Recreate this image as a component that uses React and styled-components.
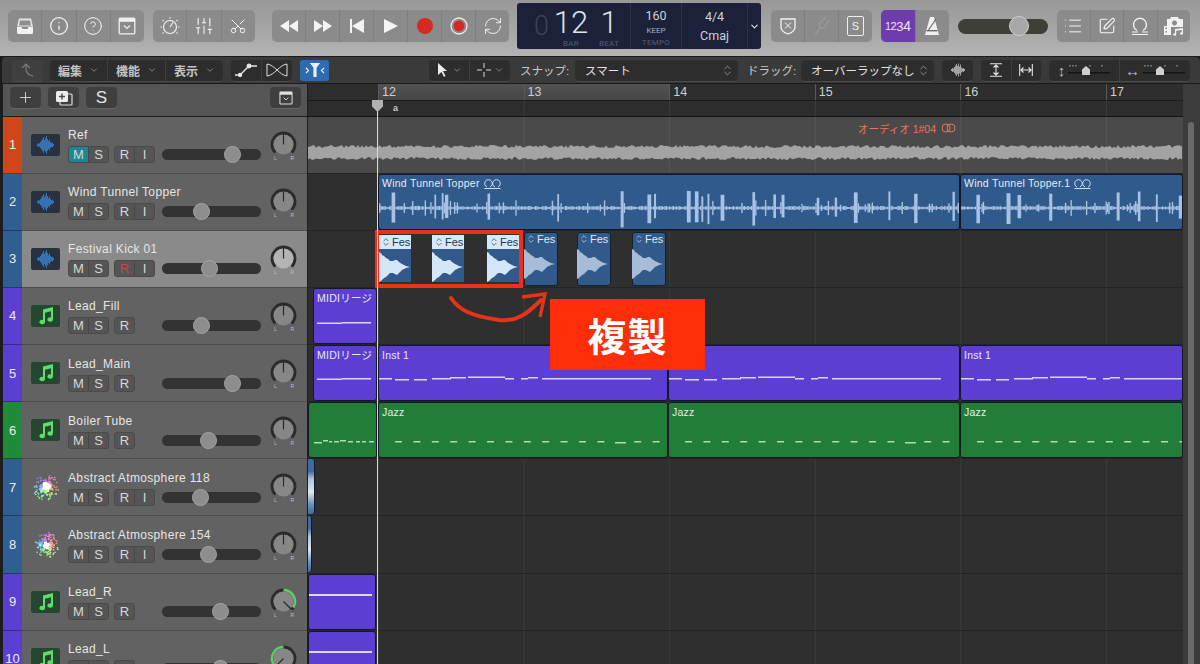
import React from "react";
import styled, { createGlobalStyle } from "styled-components";
import {
  ChevronDown,
  ChevronsUpDown,
  CircleHelp,
  Info,
  List,
  Plus,
  RefreshCw,
  Scissors,
  SlidersVertical,
  SquarePen,
} from "lucide-react";

const LANE_X = 308;
const BAR = 145.6;
const ROW = 57.15;

function rng(seed) {
  let s = seed;
  return () => {
    s = (s * 16807) % 2147483647;
    return (s % 10000) / 10000;
  };
}

/* ---------- drawings ---------- */

function RefWave({ width }) {
  const r = rng(77);
  let top = "";
  let bottom = "";
  for (let x = 0; x <= width; x += 2) {
    top += `${x},${10 - 5 - r() * 3} `;
    bottom = `${x},${10 + 4 + r() * 3} ` + bottom;
  }
  return (
    <svg width={width} height={20}>
      <polygon points={top + bottom} fill="#a3a3a3" />
    </svg>
  );
}

function SpikeWave({ width, seed }) {
  const r = rng(seed);
  const bars = [];
  let x = 0;
  while (x < width) {
    const p = r();
    let amp = 0.8 + r() * 1.4;
    let w = 1.4;
    if (p > 0.95) {
      amp = 10 + r() * 7;
      w = 1.5 + r() * 2.5;
    } else if (p > 0.84) {
      amp = 3 + r() * 5;
    }
    const down = p > 0.95 ? amp * (0.7 + r() * 0.5) : amp;
    bars.push(<rect key={x} x={x} y={17 - amp} width={w} height={amp + down} />);
    x += w;
  }
  return (
    <svg width={width} height={40} fill="#a7c2e4">
      {bars}
    </svg>
  );
}

function KickWave({ color }) {
  return (
    <svg width="32" height="30" viewBox="0 0 32 30">
      <path
        d="M0 0 L2 1 L3 3 L5 4 L7 6 L9 7 L11 9 L14 9 L16 8 L18 8 L20 10 L23 12 L27 14 L31 15 L27 16 L23 18 L20 21 L18 23 L16 22 L14 21 L11 21 L9 23 L7 25 L5 26 L3 28 L2 29 L0 30 Z"
        fill={color}
      />
    </svg>
  );
}

function Dashes({ items, width, color = "#dcd6f4", h = 1.5 }) {
  return (
    <svg width={width} height={8}>
      {items.map(([x, w, dy = 0], i) => (
        <rect key={i} x={x} y={4 + dy} width={w} height={h} fill={color} />
      ))}
    </svg>
  );
}

const INST = [
  [0, 13], [16, 14, 1], [35, 13, 1], [53, 19], [71, 16, -1], [89, 37, -1.5],
  [126, 9], [142, 7], [149, 10, -1], [163, 109],
];
const MIDI_LINE = [[3, 25, 0.5], [28, 29]];
const JAZZ = Array.from({ length: 15 }, (_, i) =>
  i === 12 ? [236, 11, 1] : [16 + i * 18.4, 7, 0]
);
const JAZZ_INTRO = [[5, 8, 1], [14, 5, -1], [20, 3], [25, 5], [31, 6, -1], [39, 5], [47, 4], [53, 4], [60, 5]];

function arcPath(cx, cy, r, from, to) {
  const pt = (a) => {
    const t = ((a - 90) * Math.PI) / 180;
    return `${cx + r * Math.cos(t)} ${cy + r * Math.sin(t)}`;
  };
  return `M${pt(from)} A${r} ${r} 0 ${to - from > 180 ? 1 : 0} 1 ${pt(to)}`;
}

function PanKnob({ pan = 0, selected }) {
  const disc = selected ? "#b4b4b4" : "#878787";
  return (
    <KnobWrap>
      <svg width="27" height="27" viewBox="0 0 27 27">
        <path d={arcPath(13.5, 13.5, 11.5, -135, 135)} stroke="#2b2b2b" strokeWidth="2.8" fill="none" />
        {pan > 0 && <path d={arcPath(13.5, 13.5, 11.5, 0, 122)} stroke="#62c86b" strokeWidth="2.8" fill="none" />}
        {pan < 0 && <path d={arcPath(13.5, 13.5, 11.5, -122, 0)} stroke="#62c86b" strokeWidth="2.8" fill="none" />}
        <circle cx="13.5" cy="13.5" r="10" fill={disc} />
        <path
          d="M13.5 13.5V2.5"
          stroke="#2b2b2b"
          strokeWidth="1.2"
          transform={`rotate(${pan * 135} 13.5 13.5)`}
        />
      </svg>
      <KnobLabels>
        <span>L</span>
        <span>R</span>
      </KnobLabels>
    </KnobWrap>
  );
}

function AudioGlyph() {
  const h = [2, 4, 3, 6, 9, 12, 16, 10, 14, 18, 12, 8, 11, 6, 4, 5, 2];
  return (
    <svg width="24" height="20" viewBox="0 0 24 20">
      {h.map((v, i) => (
        <rect key={i} x={3 + i} y={10 - v / 2} width="0.7" height={v} fill="#3d8fe6" />
      ))}
    </svg>
  );
}

function NoteGlyph() {
  return (
    <svg width="18" height="20" viewBox="0 0 18 20">
      <path
        d="M6 3.5 L16 1 V13.5 A2.8 2.2 0 1 1 14 11.4 V5.2 L8 6.7 V16 A2.8 2.2 0 1 1 6 13.9 Z"
        fill="#5fdc6c"
      />
    </svg>
  );
}

function SynthGlyph({ seed }) {
  const r = rng(seed);
  const dots = [];
  for (let i = 0; i < 110; i++) {
    const a = r() * Math.PI * 2;
    const d = Math.pow(r(), 0.7) * 13;
    dots.push(
      <circle
        key={i}
        cx={14 + Math.cos(a) * d}
        cy={14 + Math.sin(a) * d}
        r={d < 6 ? 1.6 : 0.8}
        fill={d < 4 ? "#ffffff" : `hsl(${(a * 180) / Math.PI + 40 * r()}, 85%, 74%)`}
      />
    );
  }
  return (
    <svg width="28" height="28" viewBox="0 0 28 28">
      {dots}
    </svg>
  );
}

const line = { fill: "none", stroke: "#f4f4f4", strokeWidth: 1.3 };

const LibraryIcon = () => (
  <svg width="18" height="18" viewBox="0 0 18 18">
    <path d="M3 1.5h12l2 8H1z" fill="#e6e6e6" />
    <path d="M4 3.5h10l1 5H3z" fill="#8d8d8d" />
    <path d="M1 10h4.5l1 2h5l1-2H17v5.5a1.5 1.5 0 0 1-1.5 1.5h-13A1.5 1.5 0 0 1 1 15.5z" fill="#f2f2f2" />
  </svg>
);
const PanelIcon = ({ color = "#f1f1f1", size = 18 }) => (
  <svg width={size} height={size} viewBox="0 0 18 18">
    <rect x="1.2" y="1.2" width="15.6" height="15.6" rx="1" fill="none" stroke={color} strokeWidth="1.3" />
    <rect x="1.2" y="1.2" width="15.6" height="3.6" fill={color} />
    <path d="M6 8.5l3 3 3-3" fill="none" stroke={color} strokeWidth="1.2" />
  </svg>
);
const DialIcon = () => (
  <svg width="20" height="20" viewBox="0 0 20 20" {...line} strokeWidth="1.1">
    <circle cx="10" cy="11" r="6.5" />
    <path d="M10 11l3-4.500" />
    <path d="M10 1v1.500M2.500 4l1 1M17.500 4l-1 1M0.500 11h1.500M18 11h1.500M2.500 17.500l1-1M17.500 17.500l-1-1" />
  </svg>
);
const Rewind = () => (
  <svg width="20" height="14" viewBox="0 0 20 14" fill="#f4f4f4">
    <path d="M10 1v12L1 7zM19 1v12l-9-6z" />
  </svg>
);
const Forward = () => (
  <svg width="20" height="14" viewBox="0 0 20 14" fill="#f4f4f4">
    <path d="M1 1v12l9-6zM10 1v12l9-6z" />
  </svg>
);
const ToStart = () => (
  <svg width="16" height="16" viewBox="0 0 16 16" fill="#f4f4f4">
    <path d="M1 1h2v14H1zM15 1v14L3 8z" />
  </svg>
);
const PlayIcon = () => (
  <svg width="16" height="16" viewBox="0 0 16 16" fill="#f4f4f4">
    <path d="M1 1l14 7-14 7z" />
  </svg>
);
const RecordIcon = () => (
  <svg width="18" height="18">
    <circle cx="9" cy="9" r="8" fill="#d42a22" />
  </svg>
);
const ReplaceIcon = () => (
  <svg width="18" height="18">
    <circle cx="9" cy="9" r="8" fill="none" stroke="#ececec" strokeWidth="1.3" />
    <circle cx="9" cy="9" r="5.4" fill="#d42a22" />
  </svg>
);
const ShieldIcon = () => (
  <svg width="16" height="18" viewBox="0 0 16 18" {...line}>
    <path d="M1 2h14v8c0 4-4 6-7 7-3-1-7-3-7-7z" />
    <path d="M5 5.500l6 6M11 5.500l-6 6" strokeWidth="1" />
  </svg>
);
const ForkIcon = () => (
  <svg width="16" height="20" viewBox="0 0 16 20" fill="none" stroke="#9b9b9b" strokeWidth="1.2">
    <path d="M1 19l5-7M6 12l-1-4 7-7M6 12l4 0 5-8" />
  </svg>
);
const SoloBoxIcon = () => <Boxed>S</Boxed>;
const MetronomeIcon = () => (
  <svg width="15" height="20" viewBox="0 0 15 20">
    <path d="M5 1h4l5 18H0z" fill="#f0f0f0" />
    <path d="M3.500 14L11 3" stroke="#6c6c6c" strokeWidth="1.2" />
    <rect x="1.500" y="14" width="11" height="1.4" fill="#6c6c6c" />
  </svg>
);
const LoopIcon = () => (
  <svg width="18" height="20" viewBox="0 0 18 20" {...line}>
    <path d="M6 14.500A6.500 6.500 0 1 1 12 14.500" />
    <path d="M1 16h6M11 16h6M1 18.500h16" strokeWidth="1" />
  </svg>
);
const MediaIcon = () => (
  <svg width="22" height="20" viewBox="0 0 22 20" fill="#f1f1f1">
    <path d="M8 1h7l1 2h4v8H4V3h3zM11.500 4.500a2.500 2.500 0 1 0 .01 0z" fillRule="evenodd" />
    <path d="M1 10h7v9H1zM2.500 11.500v1.500h1.500v-1.500zM2.500 15v1.500h1.500v-1.500z" fillRule="evenodd" />
    <path d="M12 13l8-1v5.500a1.500 1.300 0 1 1-1.200-1.300V14l-5.600.7v3.800a1.500 1.300 0 1 1-1.200-1.300z" />
  </svg>
);
const AutomationIcon = () => (
  <svg width="24" height="14" viewBox="0 0 24 14" fill="none" stroke="#e6e6e6" strokeWidth="1.3">
    <path d="M1 12h5l9-9h8" />
    <circle cx="6" cy="12" r="1.500" fill="#e6e6e6" />
    <circle cx="15" cy="3" r="1.800" fill="#e6e6e6" />
  </svg>
);
const FlexIcon = () => (
  <svg width="22" height="14" viewBox="0 0 22 14" fill="none" stroke="#dcdcdc" strokeWidth="1">
    <path d="M1 1v12M21 1v12M1 1c8 1 12 11 20 12M1 13c8-1 12-11 20-12" />
  </svg>
);
const CatchIcon = () => (
  <svg width="20" height="14" viewBox="0 0 20 14" fill="none" stroke="#e8f2ff" strokeWidth="1.2">
    <path d="M6 0.500h8l-3 4v9H9v-9z" fill="#e8f2ff" />
    <path d="M1 5l2.500 2.500L1 10M19 5l-2.500 2.500L19 10" />
  </svg>
);
const BackIcon = () => (
  <svg width="14" height="16" viewBox="0 0 14 16" fill="none" stroke="#7c7c7c" strokeWidth="1.2">
    <path d="M1 6l4-4 4 4M5 2v5c0 4 3 6 7 7" />
  </svg>
);
const PointerIcon = () => (
  <svg width="12" height="14" viewBox="0 0 12 14" fill="#ececec">
    <path d="M1 0l9 8H6l2.500 5-1.500 1L4.500 9 1 12z" />
  </svg>
);
const CrossIcon = () => (
  <svg width="14" height="14" viewBox="0 0 14 14" fill="none" stroke="#dcdcdc" strokeWidth="1">
    <path d="M7 0v5M7 9v5M0 7h5M9 7h5" />
  </svg>
);
const ZoomWave = () => {
  const h = [2, 4, 3, 6, 9, 12, 8, 13, 7, 11, 5, 3, 4, 2];
  return (
    <svg width="18" height="14">
      {h.map((v, i) => (
        <rect key={i} x={2 + i} y={7 - v / 2} width="0.7" height={v} fill="#d6d6d6" />
      ))}
    </svg>
  );
};
const FitV = () => (
  <svg width="14" height="14" viewBox="0 0 14 14" fill="none" stroke="#e4e4e4" strokeWidth="1.1">
    <path d="M1 0.700h12M1 13.300h12M7 2v10M4.500 4.500L7 2l2.500 2.500M4.500 9.500L7 12l2.500-2.500" />
  </svg>
);
const FitH = () => (
  <svg width="14" height="14" viewBox="0 0 14 14" fill="none" stroke="#e4e4e4" strokeWidth="1.1">
    <path d="M0.700 1v12M13.300 1v12M2 7h10M4.500 4.500L2 7l2.500 2.500M9.500 4.500L12 7l-2.500 2.500" />
  </svg>
);
const DuplicateIcon = () => (
  <svg width="18" height="16" viewBox="0 0 18 16">
    <rect x="5" y="4" width="12" height="11" rx="1" fill="none" stroke="#dedede" strokeWidth="1.2" />
    <rect x="1" y="1" width="12" height="11" rx="1.500" fill="#ececec" />
    <path d="M7 3.500v6M4 6.500h6" stroke="#4c4c4c" strokeWidth="1.4" />
  </svg>
);
const LoopRings = ({ color }) => (
  <svg width="15" height="10" viewBox="0 0 15 10" fill="none" stroke={color} strokeWidth="1">
    <circle cx="5" cy="5" r="4" />
    <circle cx="10" cy="5" r="4" />
  </svg>
);
const LinkedOmega = () => (
  <svg width="17" height="11" viewBox="0 0 17 11" fill="none" stroke="#cfe0f3" strokeWidth="1">
    <path d="M3 9a3.800 3.800 0 1 1 3 0M11 9a3.800 3.800 0 1 1 3 0" />
    <path d="M0.500 10.500h16" />
  </svg>
);
const MiniZoom = ({ x }) => (
  <svg width="42" height="16" viewBox="0 0 42 16">
    <path d="M2 3v1.500M5 3v1.500M8 3v1.500M22 3v1.500M34 3v1.500" stroke="#b8b8b8" strokeWidth="1" />
    <rect x="0" y="10" width="42" height="1.500" fill="#141414" />
    <path d={`M${x} 4l4 3.500v5.500h-8v-5.500z`} fill="#cfcfcf" />
  </svg>
);

/* ---------- data ---------- */

const TRACKS = [
  { n: 1, name: "Ref", color: "#d1471b", icon: "audio", fader: 232, input: true, mute: true },
  { n: 2, name: "Wind Tunnel Topper", color: "#2f5e93", icon: "audio", fader: 201, input: true },
  { n: 3, name: "Festival Kick 01", color: "#2f5e93", icon: "audio", fader: 209, input: true, selected: true, rec: true },
  { n: 4, name: "Lead_Fill", color: "#5a3fd1", icon: "note", fader: 201 },
  { n: 5, name: "Lead_Main", color: "#5a3fd1", icon: "note", fader: 232 },
  { n: 6, name: "Boiler Tube", color: "#1f8a37", icon: "note", fader: 208 },
  { n: 7, name: "Abstract Atmosphere 118", color: "#2f5e93", icon: "synth", fader: 200, input: true },
  { n: 8, name: "Abstract Atmosphere 154", color: "#2f5e93", icon: "synth", fader: 208, input: true },
  { n: 9, name: "Lead_R", color: "#5a3fd1", icon: "note", fader: 220, pan: 1 },
  { n: 10, name: "Lead_L", color: "#5a3fd1", icon: "note", fader: 220, pan: -1 },
];

const BLUE = "#2f5a8b";
const PURPLE = "#5c3ed2";
const GREEN = "#217d37";
const JAZZ_DASH = "#a9e0b0";

/* ---------- small parts ---------- */

function TrackRow({ t }) {
  return (
    <Row>
      <Strip $color={t.color}>{t.n}</Strip>
      <RowBody $selected={t.selected}>
        {t.icon === "synth" ? (
          <SynthBox>
            <SynthGlyph seed={t.n * 91} />
          </SynthBox>
        ) : (
          <IconBox $note={t.icon === "note"}>{t.icon === "note" ? <NoteGlyph /> : <AudioGlyph />}</IconBox>
        )}
        <TrackInfo>
          <TrackName>{t.name}</TrackName>
          <Controls>
            <Pair>
              <Mini $active={t.mute}>M</Mini>
              <Mini>S</Mini>
            </Pair>
            <Pair>
              <Mini $rec={t.rec}>R</Mini>
              {t.input && <Mini>I</Mini>}
            </Pair>
            <FaderTrack>
              <FaderThumb $x={t.fader - 161 - 9} />
            </FaderTrack>
          </Controls>
        </TrackInfo>
        <PanKnob pan={t.pan} selected={t.selected} />
      </RowBody>
    </Row>
  );
}

function Region({ x, w, color, label, children }) {
  return (
    <RegionBox $x={x - LANE_X} $w={w} $color={color}>
      {label && <RegionLabel>{label}</RegionLabel>}
      {children}
    </RegionBox>
  );
}

function KickRegion({ x, selected }) {
  return (
    <KickBox $x={x - LANE_X} $selected={selected}>
      <KickHead $selected={selected}>
        <ChevronsUpDown size={10} strokeWidth={1.6} />
        Fes
      </KickHead>
      <KickBody>
        <KickWave color={selected ? "#d3e6fa" : "#a6bcd8"} />
      </KickBody>
    </KickBox>
  );
}

export default function App() {
  return (
    <Page>
      <Global />
      <TopBar>
        <Group $w={136}>
          <TopBtn><LibraryIcon /></TopBtn>
          <TopBtn><Info size={20} color="#f6f6f6" strokeWidth={1.5} /></TopBtn>
          <TopBtn><CircleHelp size={20} color="#f6f6f6" strokeWidth={1.2} /></TopBtn>
          <TopBtn><PanelIcon /></TopBtn>
        </Group>
        <Group $w={102} $ml={9}>
          <TopBtn><DialIcon /></TopBtn>
          <TopBtn><SlidersVertical size={20} color="#f6f6f6" strokeWidth={1.3} /></TopBtn>
          <TopBtn><Scissors size={18} color="#f6f6f6" strokeWidth={1.3} style={{ transform: "rotate(-90deg)" }} /></TopBtn>
        </Group>
        <Group $w={237} $ml={17}>
          <TopBtn><Rewind /></TopBtn>
          <TopBtn><Forward /></TopBtn>
          <TopBtn><ToStart /></TopBtn>
          <TopBtn><PlayIcon /></TopBtn>
          <TopBtn><RecordIcon /></TopBtn>
          <TopBtn><ReplaceIcon /></TopBtn>
          <TopBtn><RefreshCw size={20} color="#f6f6f6" strokeWidth={1.1} /></TopBtn>
        </Group>
        <Lcd>
          <LcdPos>
            <LcdGhost>0</LcdGhost>
            <LcdCell $w={40}>
              <LcdBig>12</LcdBig>
              <LcdTiny>BAR</LcdTiny>
            </LcdCell>
            <LcdCell $w={36}>
              <LcdBig>1</LcdBig>
              <LcdTiny>BEAT</LcdTiny>
            </LcdCell>
          </LcdPos>
          <LcdTempo>
            <LcdMid>160</LcdMid>
            <LcdSmall>KEEP</LcdSmall>
            <LcdTiny>TEMPO</LcdTiny>
          </LcdTempo>
          <LcdSig>
            <LcdMid>4/4</LcdMid>
            <LcdMid>Cmaj</LcdMid>
          </LcdSig>
          <LcdMore>
            <ChevronDown size={11} color="#e4e4e4" strokeWidth={2.4} />
          </LcdMore>
        </Lcd>
        <Group $w={101} $ml={10}>
          <TopBtn><ShieldIcon /></TopBtn>
          <TopBtn><ForkIcon /></TopBtn>
          <TopBtn><SoloBoxIcon /></TopBtn>
        </Group>
        <Group $w={68} $ml={9}>
          <CountIn>
            <CountDigit $s={10}>1</CountDigit>
            <CountDigit $s={11}>2</CountDigit>
            <CountDigit $s={13}>3</CountDigit>
            <CountDigit $s={14}>4</CountDigit>
          </CountIn>
          <TopBtn><MetronomeIcon /></TopBtn>
        </Group>
        <Volume>
          <VolumeThumb />
        </Volume>
        <Group $w={133} $ml={9}>
          <TopBtn><List size={20} color="#f6f6f6" strokeWidth={1.2} /></TopBtn>
          <TopBtn><SquarePen size={18} color="#f6f6f6" strokeWidth={1.5} /></TopBtn>
          <TopBtn><LoopIcon /></TopBtn>
          <TopBtn><MediaIcon /></TopBtn>
        </Group>
      </TopBar>

      <Window>
        <EditBar>
          <DarkGroup $w={31} $ml={0} $flat><BackIcon /></DarkGroup>
          <DarkGroup $w={173} $ml={7}>
            <MenuItem>編集<ChevronDown size={10} strokeWidth={1.4} /></MenuItem>
            <MenuItem>機能<ChevronDown size={10} strokeWidth={1.4} /></MenuItem>
            <MenuItem>表示<ChevronDown size={10} strokeWidth={1.4} /></MenuItem>
          </DarkGroup>
          <DarkGroup $w={61} $ml={8}>
            <DarkBtn><AutomationIcon /></DarkBtn>
            <DarkBtn><FlexIcon /></DarkBtn>
          </DarkGroup>
          <CatchBtn><CatchIcon /></CatchBtn>
          <DarkGroup $w={81} $ml={100}>
            <DarkBtn><PointerIcon /><ChevronDown size={10} color="#bbb" strokeWidth={1.4} /></DarkBtn>
            <DarkBtn><CrossIcon /><ChevronDown size={10} color="#bbb" strokeWidth={1.4} /></DarkBtn>
          </DarkGroup>
          <BarLabel $ml={10}>スナップ:</BarLabel>
          <Select $w={163} $ml={7}>
            スマート
            <ChevronsUpDown size={13} strokeWidth={1.2} color="#bbb" />
          </Select>
          <BarLabel $ml={9}>ドラッグ:</BarLabel>
          <Select $w={133} $ml={6}>
            オーバーラップなし
            <ChevronsUpDown size={13} strokeWidth={1.2} color="#bbb" />
          </Select>
          <DarkGroup $w={31} $ml={8}><ZoomWave /></DarkGroup>
          <DarkGroup $w={60} $ml={8}>
            <DarkBtn><FitV /></DarkBtn>
            <DarkBtn><FitH /></DarkBtn>
          </DarkGroup>
          <DarkGroup $w={141} $ml={8}>
            <DarkBtn>
              <ArrowGlyph>↕</ArrowGlyph>
              <MiniZoom x={18} />
            </DarkBtn>
            <DarkBtn>
              <ArrowGlyph>↔</ArrowGlyph>
              <MiniZoom x={17} />
            </DarkBtn>
          </DarkGroup>
        </EditBar>

        <Body>
          <Left>
            <HeaderTools>
              <HeadBtn><Plus size={17} color="#e6e6e6" strokeWidth={1.2} /></HeadBtn>
              <HeadBtn><DuplicateIcon /></HeadBtn>
              <HeadBtn>S</HeadBtn>
              <HeadBtn $push><PanelIcon color="#e0e0e0" size={14} /></HeadBtn>
            </HeaderTools>
            {TRACKS.map((t) => (
              <TrackRow key={t.n} t={t} />
            ))}
          </Left>

          <Right>
            <Ruler>
              <BarRow>
                <BarCell $w={70} $blank />
                {[12, 13, 14, 15, 16, 17].map((b) => (
                  <BarCell key={b} $w={BAR} $lit={b < 14}>{b}</BarCell>
                ))}
              </BarRow>
              <MarkerRow>
                <MarkerA>a</MarkerA>
              </MarkerRow>
            </Ruler>

            <Lanes>
              <Lane $ref>
                <RefLabel>
                  オーディオ 1#04 <LoopRings color="#e9755a" />
                </RefLabel>
                <RefWaveWrap>
                  <RefWave width={875} />
                </RefWaveWrap>
              </Lane>
              <Lane>
                <Region x={378} w={582} color={BLUE} label={<>Wind Tunnel Topper <LinkedOmega /></>}>
                  <WaveSlot><SpikeWave width={582} seed={41} /></WaveSlot>
                </Region>
                <Region x={960} w={223} color={BLUE} label={<>Wind Tunnel Topper.1 <LinkedOmega /></>}>
                  <WaveSlot><SpikeWave width={223} seed={93} /></WaveSlot>
                </Region>
              </Lane>
              <Lane>
                <KickRegion x={379} selected />
                <KickRegion x={432} selected />
                <KickRegion x={487} selected />
                <KickRegion x={524} />
                <KickRegion x={577} />
                <KickRegion x={632} />
              </Lane>
              <Lane>
                <Region x={313} w={64} color={PURPLE} label="MIDIリージ">
                  <DashSlot $y={29}><Dashes width={62} items={MIDI_LINE} /></DashSlot>
                </Region>
              </Lane>
              <Lane>
                <Region x={313} w={64} color={PURPLE} label="MIDIリージ">
                  <DashSlot $y={28}><Dashes width={62} items={MIDI_LINE} /></DashSlot>
                </Region>
                <Region x={378} w={290} color={PURPLE} label="Inst 1">
                  <DashSlot $y={28}><Dashes width={288} items={INST} /></DashSlot>
                </Region>
                <Region x={668} w={292} color={PURPLE} label="Inst 1">
                  <DashSlot $y={28}><Dashes width={288} items={INST} /></DashSlot>
                </Region>
                <Region x={960} w={223} color={PURPLE} label="Inst 1">
                  <DashSlot $y={28}><Dashes width={222} items={INST} /></DashSlot>
                </Region>
              </Lane>
              <Lane>
                <Region x={308} w={69} color={GREEN}>
                  <DashSlot $y={34}><Dashes width={66} items={JAZZ_INTRO} color={JAZZ_DASH} /></DashSlot>
                </Region>
                <Region x={378} w={290} color={GREEN} label="Jazz">
                  <DashSlot $y={34}><Dashes width={288} items={JAZZ} color={JAZZ_DASH} /></DashSlot>
                </Region>
                <Region x={668} w={292} color={GREEN} label="Jazz">
                  <DashSlot $y={34}><Dashes width={288} items={JAZZ} color={JAZZ_DASH} /></DashSlot>
                </Region>
                <Region x={960} w={223} color={GREEN} label="Jazz">
                  <DashSlot $y={34}><Dashes width={222} items={JAZZ} color={JAZZ_DASH} /></DashSlot>
                </Region>
              </Lane>
              <Lane>
                <SliverRegion $w={6} />
              </Lane>
              <Lane>
                <SliverRegion $w={3} />
              </Lane>
              <Lane>
                <Region x={308} w={68} color={PURPLE}>
                  <PlainLine />
                </Region>
              </Lane>
              <Lane>
                <Region x={308} w={68} color={PURPLE}>
                  <PlainLine />
                </Region>
              </Lane>

              <SelectFrame />
              <CopyArrow viewBox="0 0 110 40" width="110" height="40">
                <path d="M2 6C10 18 22 24 50 28C68 30 78 22 92 8" fill="none" stroke="#e8321a" strokeWidth="4" strokeLinecap="round" />
                <path d="M73 5L96 2L91 25" fill="none" stroke="#e8321a" strokeWidth="3.4" />
              </CopyArrow>
              <CopyLabel>複製</CopyLabel>
            </Lanes>

            <Playhead>
              <PlayheadCap />
            </Playhead>
            <Scroller>
              <ScrollThumb />
            </Scroller>
          </Right>
        </Body>
      </Window>
    </Page>
  );
}

/* ---------- styles ---------- */

const Global = createGlobalStyle`
  html, body {
    margin: 0;
    padding: 0;
    background: #2b2b2b;
  }
  body {
    font-family: "Liberation Sans", "Noto Sans CJK JP", sans-serif;
  }
`;

const Page = styled.div`
  width: 1200px;
  height: 664px;
  overflow: hidden;
  display: flex;
  flex-direction: column;
`;

const TopBar = styled.div`
  height: 56px;
  flex: none;
  display: flex;
  align-items: center;
  padding: 0 0 4px 8px;
  box-sizing: border-box;
  background: linear-gradient(#989898, #b3b3b3);
`;

const Group = styled.div`
  width: ${(p) => p.$w}px;
  margin-left: ${(p) => p.$ml || 0}px;
  height: 32px;
  display: flex;
  flex: none;
  border-radius: 5px;
  overflow: hidden;
  background: #8b8b8b;
  box-shadow: 0 1px 0 #a8a8a8;
`;

const TopBtn = styled.div`
  flex: 1;
  display: flex;
  align-items: center;
  justify-content: center;
  border-left: 1px solid #7f7f7f;
  &:first-child {
    border-left: 0;
  }
`;

const Boxed = styled.div`
  width: 15px;
  height: 18px;
  border: 1px solid #efefef;
  border-radius: 2px;
  color: #efefef;
  font-size: 11px;
  display: flex;
  align-items: center;
  justify-content: center;
`;

const CountIn = styled.div`
  width: 34px;
  flex: none;
  background: #6f3cb0;
  color: #f0e6ff;
  display: flex;
  align-items: center;
  justify-content: center;
`;

const CountDigit = styled.span`
  font-size: ${(p) => p.$s}px;
  letter-spacing: -0.3px;
`;

const Lcd = styled.div`
  width: 244px;
  height: 46px;
  margin-left: 8px;
  flex: none;
  display: flex;
  border-radius: 3px;
  background: #1a2138;
  color: #d5d9e2;
  font-family: Roboto, "Liberation Sans", sans-serif;
`;

const LcdPos = styled.div`
  width: 114px;
  display: flex;
  padding-left: 17px;
  box-sizing: border-box;
  border-right: 1px solid #2a3148;
`;

const LcdGhost = styled.div`
  font-size: 27px;
  font-weight: 300;
  color: #3b4257;
  padding-top: 7px;
  width: 17px;
`;

const LcdCell = styled.div`
  width: ${(p) => p.$w}px;
  display: flex;
  flex-direction: column;
  align-items: center;
`;

const LcdBig = styled.div`
  font-size: 31px;
  font-weight: 300;
  line-height: 30px;
  margin-top: 5px;
  height: 33px;
  color: #dfe3ea;
`;

const LcdTiny = styled.div`
  font-size: 8px;
  line-height: 10px;
  color: #565d72;
  letter-spacing: 0.3px;
`;

const LcdTempo = styled.div`
  width: 51px;
  display: flex;
  flex-direction: column;
  align-items: center;
  padding-top: 5px;
  box-sizing: border-box;
  border-right: 1px solid #2a3148;
  ${LcdTiny} {
    margin-top: 2px;
  }
`;

const LcdMid = styled.div`
  font-size: 12.5px;
  line-height: 16px;
  color: #cdd2dc;
`;

const LcdSmall = styled.div`
  font-size: 8px;
  line-height: 10px;
  margin-top: 2px;
  color: #aab0bd;
`;

const LcdSig = styled.div`
  width: 66px;
  display: flex;
  flex-direction: column;
  align-items: center;
  gap: 3px;
  padding-top: 6px;
  box-sizing: border-box;
  border-right: 1px solid #2a3148;
`;

const LcdMore = styled.div`
  flex: 1;
  display: flex;
  align-items: center;
  justify-content: center;
`;

const Volume = styled.div`
  width: 90px;
  height: 15px;
  margin-left: 9px;
  flex: none;
  border-radius: 8px;
  background: #3e4038;
  position: relative;
`;

const VolumeThumb = styled.div`
  position: absolute;
  left: 51px;
  top: -3px;
  width: 20px;
  height: 20px;
  border-radius: 50%;
  background: #a8a8a8;
  border: 1px solid #cfcfcf;
  box-sizing: border-box;
`;

const Window = styled.div`
  flex: 1;
  min-height: 0;
  display: flex;
  flex-direction: column;
  background: #1d1d1d;
  padding-left: 3px;
`;

const EditBar = styled.div`
  height: 28px;
  flex: none;
  display: flex;
  align-items: center;
  background: #3a3a3a;
  margin-left: -3px;
  padding-left: 10px;
  box-sizing: border-box;
  border: 1px solid #1b1b1b;
  border-width: 1px 0 1px 2px;
  border-radius: 5px 5px 0 0;
`;

const DarkGroup = styled.div`
  width: ${(p) => p.$w}px;
  margin-left: ${(p) => p.$ml}px;
  height: 21px;
  flex: none;
  display: flex;
  align-items: center;
  justify-content: center;
  border-radius: 4px;
  background: ${(p) => (p.$flat ? "#3f3f3f" : "#2d2d2d")};
  box-shadow: 0 1px 0 #4a4a4a;
`;

const MenuItem = styled.div`
  flex: 1;
  display: flex;
  align-items: center;
  justify-content: center;
  gap: 7px;
  color: #c4c4c4;
  font-size: 12px;
  font-weight: 700;
  height: 100%;
  border-left: 1px solid #3f3f3f;
  &:first-child {
    border-left: 0;
  }
`;

const DarkBtn = styled.div`
  flex: 1;
  display: flex;
  align-items: center;
  justify-content: center;
  gap: 3px;
  height: 100%;
  border-left: 1px solid #3f3f3f;
  &:first-child {
    border-left: 0;
  }
`;

const CatchBtn = styled.div`
  width: 29px;
  height: 21px;
  margin-left: 8px;
  flex: none;
  border-radius: 3px;
  background: #2f6bb0;
  display: flex;
  align-items: center;
  justify-content: center;
`;

const BarLabel = styled.div`
  margin-left: ${(p) => p.$ml}px;
  color: #c9c9c9;
  font-size: 11.5px;
  white-space: nowrap;
  width: 48px;
  flex: none;
`;

const Select = styled.div`
  width: ${(p) => p.$w}px;
  margin-left: ${(p) => p.$ml}px;
  height: 21px;
  flex: none;
  display: flex;
  align-items: center;
  justify-content: space-between;
  padding: 0 4px 0 10px;
  box-sizing: border-box;
  border-radius: 4px;
  background: #2d2d2d;
  color: #e4e4e4;
  font-size: 11.5px;
  white-space: nowrap;
  box-shadow: 0 1px 0 #4a4a4a;
`;

const ArrowGlyph = styled.span`
  color: #bdbdbd;
  font-size: 15px;
`;

const Body = styled.div`
  flex: 1;
  min-height: 0;
  display: flex;
`;

const Left = styled.div`
  width: 305px;
  flex: none;
  overflow: hidden;
  box-sizing: border-box;
  border-right: 1px solid #1d1d1d;
`;

const HeaderTools = styled.div`
  height: 32.500px;
  display: flex;
  align-items: center;
  gap: 7px;
  padding: 0 6px 4px 7px;
  box-sizing: border-box;
  background: #555555;
  border-bottom: 1px solid #1d1d1d;
`;

const HeadBtn = styled.div`
  width: 31px;
  height: 21px;
  display: flex;
  align-items: center;
  justify-content: center;
  border-radius: 4px;
  background: #3f3f3f;
  color: #e4e4e4;
  font-size: 17px;
  box-shadow: 0 1px 0 #666;
  margin-left: ${(p) => (p.$push ? "auto" : 0)};
`;

const Row = styled.div`
  height: ${ROW}px;
  display: flex;
  flex: none;
`;

const Strip = styled.div`
  width: 19px;
  flex: none;
  background: ${(p) => p.$color};
  color: #ececec;
  font-size: 13px;
  display: flex;
  align-items: center;
  justify-content: center;
  border-bottom: 1px solid rgba(0, 0, 0, 0.35);
  box-sizing: border-box;
`;

const RowBody = styled.div`
  flex: 1;
  display: flex;
  align-items: center;
  padding-left: 9px;
  box-sizing: border-box;
  background: ${(p) => (p.$selected ? "#8a8a8a" : "#626262")};
  border-bottom: 1px solid #4d4d4d;
`;

const IconBox = styled.div`
  width: 29px;
  height: 22px;
  flex: none;
  border-radius: 2px;
  background: ${(p) => (p.$note ? "#24472f" : "#273140")};
  display: flex;
  align-items: center;
  justify-content: center;
`;

const SynthBox = styled(IconBox)`
  background: transparent;
`;

const TrackInfo = styled.div`
  width: 193px;
  margin-left: 8px;
  flex: none;
  display: flex;
  flex-direction: column;
  padding-top: 2px;
`;

const TrackName = styled.div`
  color: #e6e6e6;
  font-size: 12px;
  letter-spacing: 0.35px;
  line-height: 14px;
  height: 18px;
  white-space: nowrap;
`;

const Controls = styled.div`
  display: flex;
  align-items: center;
  gap: 5px;
`;

const Pair = styled.div`
  display: flex;
  height: 17px;
  border-radius: 3px;
  overflow: hidden;
  border: 1px solid #4a4a4a;
  box-sizing: border-box;
  background: #555555;
`;

const Mini = styled.div`
  width: 19px;
  display: flex;
  align-items: center;
  justify-content: center;
  font-size: 13px;
  color: ${(p) => (p.$rec ? "#d8403a" : "#d8d8d8")};
  background: ${(p) => (p.$active ? "#1b8893" : "transparent")};
  border-left: 1px solid #474747;
  &:first-child {
    border-left: 0;
  }
`;

const FaderTrack = styled.div`
  width: 99px;
  height: 11px;
  margin-left: auto;
  border-radius: 6px;
  background: #333333;
  position: relative;
`;

const FaderThumb = styled.div`
  position: absolute;
  left: ${(p) => p.$x}px;
  top: -3px;
  width: 17px;
  height: 17px;
  border-radius: 50%;
  background: #8d8d8d;
  border: 1px solid #a5a5a5;
  box-sizing: border-box;
`;

const KnobWrap = styled.div`
  margin-left: 9px;
  flex: none;
  position: relative;
  width: 27px;
  height: 27px;
  margin-top: -1px;
`;

const KnobLabels = styled.div`
  position: absolute;
  left: 4px;
  right: 3px;
  bottom: -3px;
  display: flex;
  justify-content: space-between;
  font-size: 5px;
  color: #bdbdbd;
`;

const Right = styled.div`
  flex: 1;
  min-width: 0;
  position: relative;
  display: flex;
  flex-direction: column;
  padding-right: 17px;
  background: #4a4a4a;
`;

const Ruler = styled.div`
  height: 32.500px;
  flex: none;
  display: flex;
  flex-direction: column;
  background: #2d2d2d;
  border-bottom: 1px solid #141414;
  box-sizing: border-box;
`;

const BarRow = styled.div`
  height: 16px;
  display: flex;
  flex: none;
  border-bottom: 1px solid #1a1a1a;
`;

const BarCell = styled.div`
  width: ${(p) => p.$w}px;
  flex: none;
  padding-left: 3px;
  box-sizing: border-box;
  border-left: ${(p) => (p.$blank ? "0" : "1px solid #5a5a5a")};
  background: ${(p) => (p.$lit ? "linear-gradient(#525252, #464646)" : "#2d2d2d")};
  color: #cfcfcf;
  font-size: 12.5px;
  line-height: 16px;
`;

const MarkerRow = styled.div`
  flex: 1;
  padding-left: 85px;
  background-image: linear-gradient(90deg, #3c3c3c 1px, transparent 1px);
  background-size: ${BAR}px 100%;
  background-position: 70px 0;
`;

const MarkerA = styled.div`
  color: #c8c8c8;
  font-size: 9px;
  font-weight: 700;
  line-height: 14px;
`;

const Lanes = styled.div`
  flex: 1;
  min-height: 0;
  position: relative;
  overflow: hidden;
`;

const Lane = styled.div`
  height: ${ROW}px;
  position: relative;
  box-sizing: border-box;
  border-bottom: 1px solid #242424;
  background-color: ${(p) => (p.$ref ? "#4a4a4a" : "#2f2f2f")};
  background-image: linear-gradient(90deg, ${(p) => (p.$ref ? "#565656" : "#3b3b3b")} 1px, transparent 1px);
  background-size: ${BAR}px 100%;
  background-position: 70px 0;
`;

const RefLabel = styled.div`
  position: absolute;
  left: 550px;
  top: 4px;
  display: flex;
  align-items: center;
  gap: 5px;
  color: #e9755a;
  font-size: 10.500px;
  white-space: nowrap;
`;

const RefWaveWrap = styled.div`
  position: absolute;
  left: 0;
  top: 26px;
  height: 20px;
  svg {
    display: block;
  }
`;

const RegionBox = styled.div`
  position: absolute;
  left: ${(p) => p.$x}px;
  width: ${(p) => p.$w}px;
  top: 0;
  bottom: 0;
  overflow: hidden;
  border-radius: 3px;
  border: 1px solid #14182a;
  box-sizing: border-box;
  background: ${(p) => p.$color};
`;

const SliverRegion = styled.div`
  position: absolute;
  left: 0;
  top: 0;
  bottom: 1px;
  width: ${(p) => p.$w}px;
  border-radius: 0 3px 3px 0;
  border-right: 1px solid #14182a;
  background: linear-gradient(#3f6a9c 0 22%, #a9c4df 36%, #dce8f2 60%, #6f93b8 82%, #3f6a9c 100%);
`;

const RegionLabel = styled.div`
  display: flex;
  align-items: center;
  gap: 4px;
  height: 15px;
  padding: 1px 0 0 3px;
  color: #e7eaf2;
  font-size: 10.500px;
  letter-spacing: 0.25px;
  white-space: nowrap;
`;

const WaveSlot = styled.div`
  position: absolute;
  left: 0;
  top: 16px;
  svg {
    display: block;
  }
`;

const DashSlot = styled.div`
  position: absolute;
  left: 0;
  top: ${(p) => p.$y}px;
  svg {
    display: block;
  }
`;

const PlainLine = styled.div`
  position: absolute;
  left: 0;
  right: 3px;
  top: 19px;
  height: 2px;
  background: #ded8f6;
`;

const KickBox = styled.div`
  position: absolute;
  left: ${(p) => p.$x}px;
  width: ${(p) => (p.$selected ? 32 : 34)}px;
  top: ${(p) => (p.$selected ? 4 : 1)}px;
  bottom: ${(p) => (p.$selected ? 5 : 1)}px;
  border-radius: ${(p) => (p.$selected ? 0 : 3)}px;
  overflow: hidden;
  background: #31598a;
  box-shadow: ${(p) => (p.$selected ? "none" : "inset 0 0 0 1px #14202f")};
  display: flex;
  flex-direction: column;
`;

const KickHead = styled.div`
  height: 14px;
  flex: none;
  display: flex;
  align-items: center;
  gap: 1px;
  padding-left: 2px;
  font-size: 11px;
  background: ${(p) => (p.$selected ? "#d7e8f8" : "transparent")};
  color: ${(p) => (p.$selected ? "#23384f" : "#dfe8f3")};
`;

const KickBody = styled.div`
  flex: 1;
  display: flex;
  align-items: flex-start;
  padding-top: 3px;
`;

const SelectFrame = styled.div`
  position: absolute;
  left: 67px;
  top: 113px;
  width: 148px;
  height: 58px;
  border: 4px solid #e8321a;
  box-sizing: border-box;
`;

const CopyArrow = styled.svg`
  position: absolute;
  left: 141px;
  top: 175px;
`;

const CopyLabel = styled.div`
  position: absolute;
  left: 242px;
  top: 182px;
  width: 155px;
  height: 71px;
  display: flex;
  align-items: center;
  justify-content: center;
  background: #ff2d0a;
  color: #ffffff;
  font-family: "Noto Sans CJK JP", sans-serif;
  font-weight: 700;
  font-size: 39px;
  letter-spacing: 1px;
`;

const Playhead = styled.div`
  position: absolute;
  left: 69px;
  top: 16px;
  bottom: 0;
  width: 1px;
  background: #d8d8d8;
`;

const PlayheadCap = styled.div`
  position: absolute;
  left: -5px;
  top: 0;
  width: 11px;
  height: 12px;
  background: #b0b0b0;
  clip-path: polygon(0 0, 100% 0, 100% 55%, 50% 100%, 0 55%);
`;

const Scroller = styled.div`
  position: absolute;
  right: 0;
  top: 0;
  bottom: 0;
  width: 17px;
  background: #3c3c3c;
`;

const ScrollThumb = styled.div`
  position: absolute;
  left: 5px;
  top: 38px;
  width: 6px;
  height: 560px;
  border-radius: 3px;
  background: #6a6a6a;
`;
